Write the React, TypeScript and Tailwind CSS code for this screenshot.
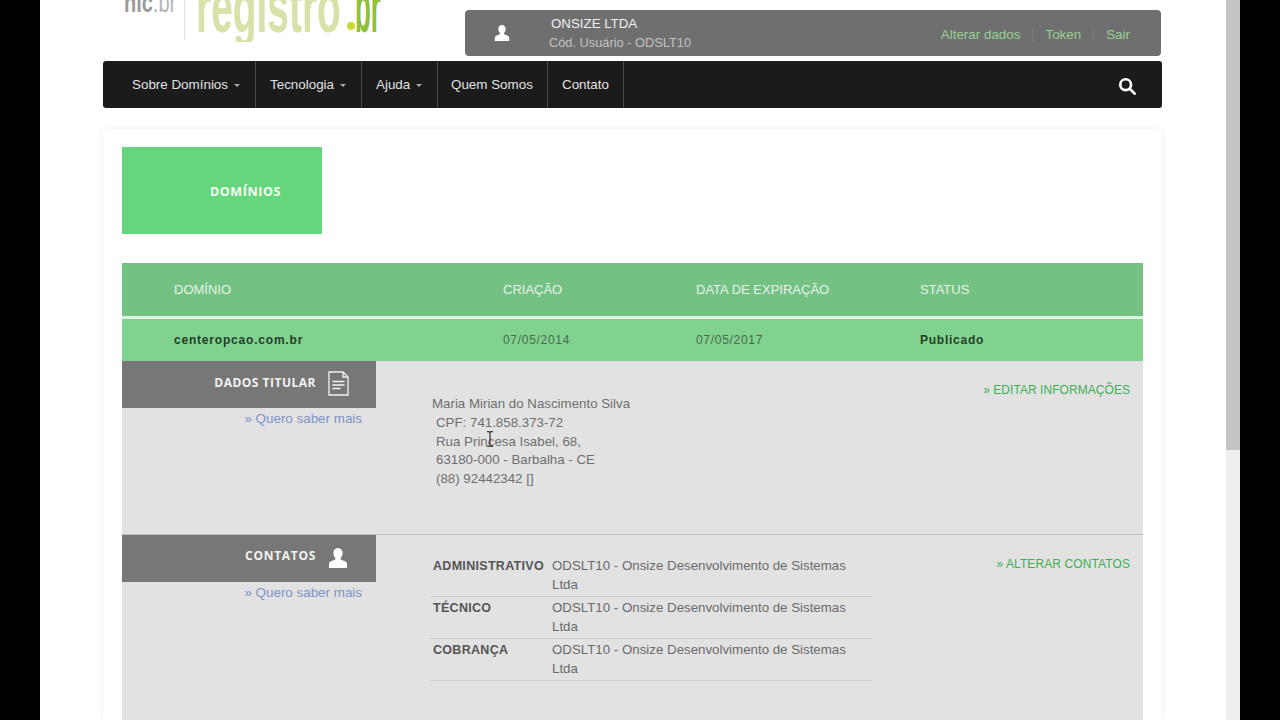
import React from "react";

const Caret = () => <span className="ml-[6px] inline-block w-0 h-0 border-x-[3.500px] border-x-transparent border-t-[3px] border-t-[#aaa] align-middle" />;

const nav = [
  { t: "Sobre Domínios", w: "w-[153px]", c: true, pl: "pl-[29px]" },
  { t: "Tecnologia", w: "w-[106px]", c: true, pl: "pl-[14px]" },
  { t: "Ajuda", w: "w-[76px]", c: true, pl: "pl-[14px]" },
  { t: "Quem Somos", w: "w-[110px]", c: false, pl: "pl-[13px]" },
  { t: "Contato", w: "w-[76px]", c: false, pl: "pl-[14px]" },
];

const UserIcon = ({ cls }: { cls: string }) => (
  <svg viewBox="0 0 20 20" className={cls} fill="#fff">
    <path d="M10 0c-3 0-4.600 2.200-4.600 5 0 2.200.9 4 2 5.100v1.500C5 12.500 1.500 13.600 1 15.500V20h18v-4.500c-.5-1.900-4-3-6.400-3.900v-1.500c1.100-1.100 2-2.900 2-5.100C14.600 2.200 13 0 10 0z" />
  </svg>
);

const DocIcon = () => (
  <svg viewBox="0 0 21 25" className="w-[21px] h-[25px] -mt-[2px]" fill="none" stroke="#f2f2f2" strokeWidth="1.300">
    <path d="M1 1h14l5 5v18H1z" />
    <path d="M15 1v5h5" />
    <path d="M4.500 10.500h12M4.500 14h12M4.500 17.500h8" strokeWidth="1.600" />
  </svg>
);

const IBeam = () => (
  <svg viewBox="0 0 8 16" className="absolute left-[54px] top-[36px] w-[8px] h-[16px]" fill="none" stroke="#333" strokeWidth="1.200">
    <path d="M1 .6h2l1 1 1-1h2M4 1.600v12.800M1 15.400h2l1-1 1 1h2" />
  </svg>
);

const SideHead = ({ title, icon, cls }: { title: string; icon: React.ReactNode; cls: string }) => (
  <div className="w-[254px] shrink-0">
    <div className="h-[47px] bg-[#777777] flex items-center justify-end pr-[27px]">
      <span className={`text-[12px] font-bold text-[#f2f2f2] mr-[12px] ${cls} font-['Open_Sans',sans-serif]`}>{title}</span>
      {icon}
    </div>
    <div className="mt-[1.500px] pr-[14px] text-right text-[13.400px] leading-[18px] text-[#7d93c8]">» Quero saber mais</div>
  </div>
);

const contacts = ["ADMINISTRATIVO", "TÉCNICO", "COBRANÇA"];

export default function App() {
  return (
    <div className="h-[720px] w-[1280px] overflow-hidden flex bg-black font-['Liberation_Sans',Arial,sans-serif]">
      <div className="w-[40px] shrink-0" />
      <main className="w-[1186px] shrink-0 bg-white flex flex-col pl-[63px] pr-[64px]">
        <header className="h-[61px] shrink-0 flex justify-between">
          <div className="relative overflow-hidden h-[42px] w-[300px]">
            <span className="absolute left-[21px] -top-[12px] text-[27px] leading-[30px] text-[#9a9a9a] origin-left scale-x-[0.74] whitespace-nowrap">
              <span className="font-bold">nic</span><span className="font-normal text-[#b5b5b5]">.br</span>
            </span>
            <div className="absolute left-[81px] top-0 h-[40px] w-px bg-[#e2e2e2]" />
            <span className="absolute left-[93px] -top-[34px] text-[72px] leading-[82px] font-bold text-[#d7e2a8] origin-left scale-x-[0.54] whitespace-nowrap">registro</span>
            <div className="absolute left-[244px] top-[22px] w-[8px] h-[8px] rounded-full bg-[#c5d92e]" />
            <span className="absolute left-[252px] -top-[34px] text-[72px] leading-[82px] font-bold text-[#8fc03a] origin-left scale-x-[0.36] whitespace-nowrap">br</span>
          </div>
          <div className="mt-[10px] mr-[1px] w-[696px] h-[46px] rounded-[4px] bg-[#6f6f6f] flex items-center">
            <UserIcon cls="ml-[29px] w-[16px] h-[18px] shrink-0" />
            <div className="ml-[39px] flex flex-col">
              <span className="text-[13.300px] leading-[19px] text-[#f0f0f0] ml-[2px]">ONSIZE LTDA</span>
              <span className="text-[12.800px] leading-[19px] text-[#c2c2c2]">Cód. Usuário - ODSLT10</span>
            </div>
            <div className="ml-auto mr-[31px] mt-[4px] flex items-center text-[13.400px] text-[#96d090]">
              <span>Alterar dados</span>
              <span className="mx-[12px] h-[14px] w-px bg-[#7b7b7b]" />
              <span>Token</span>
              <span className="mx-[12px] h-[14px] w-px bg-[#7b7b7b]" />
              <span>Sair</span>
            </div>
          </div>
        </header>

        <nav className="h-[47px] shrink-0 rounded-[3px] bg-[#1b1b1b] flex items-center text-[13.400px] text-[#e2e2e2]">
          {nav.map((n) => (
            <div key={n.t} className={`${n.w} ${n.pl} h-full pt-[1px] flex items-center border-r border-[#4a4a4a] whitespace-nowrap`}>
              {n.t}
              {n.c && <Caret />}
            </div>
          ))}
          <svg viewBox="0 0 20 20" className="ml-auto mr-[26px] mt-[2px] w-[18px] h-[18px]" fill="none" stroke="#fff" strokeWidth="3">
            <circle cx="8.500" cy="8.500" r="6" />
            <path d="M13 13l5.500 5.500" strokeLinecap="round" />
          </svg>
        </nav>

        <section className="mt-[21px] flex-1 min-h-0 rounded-t-[4px] px-[19px] pt-[18px] shadow-[0_0_6px_rgba(0,0,0,0.08)]">
          <div className="w-[200px] h-[87px] bg-[#66d67e] flex items-center justify-end pr-[41px]">
            <span className="text-[12.500px] font-bold text-[#f4fff0] tracking-[0.6px] mt-[3px] font-['Open_Sans',sans-serif]">DOMÍNIOS</span>
          </div>

          <div className="mt-[29px] h-[53px] bg-[#74c283] flex items-center text-[13px] text-[#e6f2e8]">
            <span className="ml-[52px] w-[329px]">DOMÍNIO</span>
            <span className="w-[193px]">CRIAÇÃO</span>
            <span className="w-[224px]">DATA DE EXPIRAÇÃO</span>
            <span>STATUS</span>
          </div>
          <div className="h-[3px] bg-[#dff5e2]" />
          <div className="h-[42px] bg-[#82d28f] flex items-center text-[12px] text-[#456a4e] tracking-[0.7px]">
            <span className="ml-[52px] w-[329px] font-bold tracking-[0.8px] text-[#24402b]">centeropcao.com.br</span>
            <span className="w-[193px]">07/05/2014</span>
            <span className="w-[224px]">07/05/2017</span>
            <span className="font-bold tracking-[0.75px] text-[#24402b]">Publicado</span>
          </div>

          <div className="h-[360px] bg-[#e2e2e2]">
            <div className="h-[174px] flex border-b border-[#bdbdbd]">
              <SideHead title="DADOS TITULAR" icon={<DocIcon />} cls="mb-[4px] tracking-[0.5px]" />
              <div className="ml-[56px] mt-[34px] text-[13.300px] leading-[18.800px] text-[#6f6f6f] relative">
                <div>Maria Mirian do Nascimento Silva</div>
                <div className="pl-[4px]">CPF: 741.858.373-72</div>
                <div className="pl-[4px]">Rua Princesa Isabel, 68,</div>
                <div className="pl-[4px]">63180-000 - Barbalha - CE</div>
                <div className="pl-[4px]">(88) 92442342 []</div>
                <IBeam />
              </div>
              <div className="ml-auto mt-[20px] mr-[13px] text-[12px] font-medium tracking-[0.05px] text-[#3fae55] leading-[18px]">» EDITAR INFORMAÇÕES</div>
            </div>
            <div className="flex">
              <SideHead title="CONTATOS" icon={<UserIcon cls="w-[20px] h-[22px] mr-[1px] -mt-[2px]" />} cls="mb-[6px] tracking-[0.7px]" />
              <div className="ml-[54px] mt-[20px] w-[442px] text-[13.300px] leading-[19px] text-[#6a6a6a]">
                {contacts.map((label) => (
                  <div key={label} className="h-[42px] pt-[1px] flex border-b border-[#cfcfcf]">
                    <span className="w-[122px] pl-[3px] pt-[1px] font-bold text-[#555] text-[12.500px] tracking-[0.3px] shrink-0">{label}</span>
                    <span className="w-[300px]">ODSLT10 - Onsize Desenvolvimento de Sistemas Ltda</span>
                  </div>
                ))}
              </div>
              <div className="ml-auto mt-[20px] mr-[13px] text-[12px] font-medium tracking-[0.1px] text-[#3fae55] leading-[18px]">» ALTERAR CONTATOS</div>
            </div>
          </div>
        </section>
      </main>
      <div className="w-[14px] shrink-0 bg-[#efefef]">
        <div className="h-[450px] bg-[#c4c4c4]" />
      </div>
      <div className="w-[40px] shrink-0" />
    </div>
  );
}
